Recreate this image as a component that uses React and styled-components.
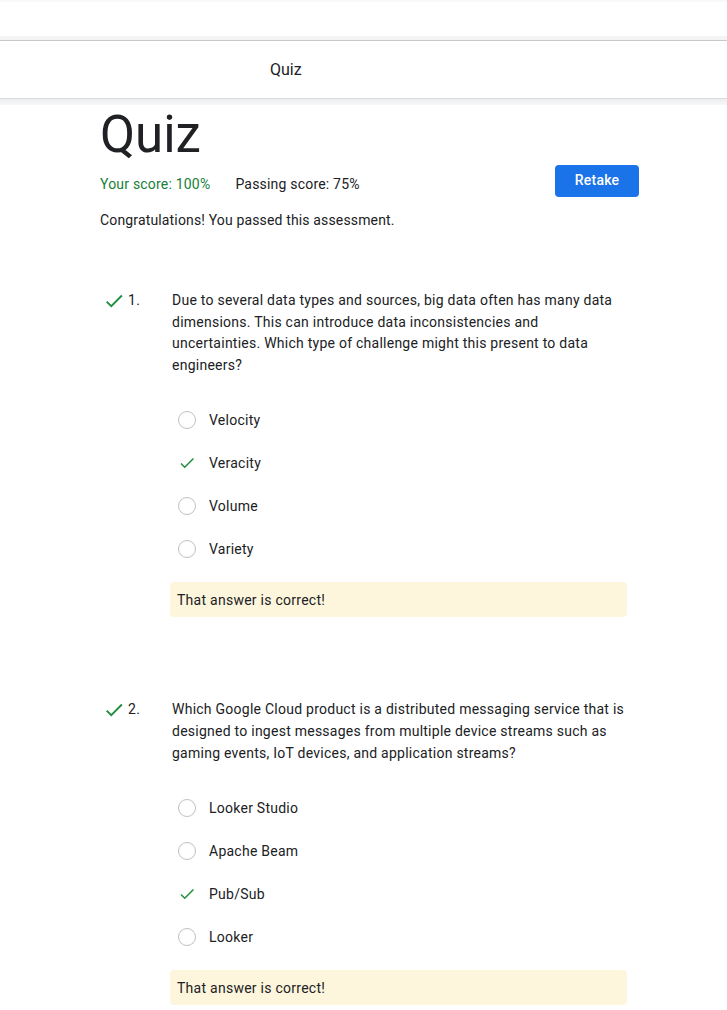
import React from 'react';
import styled, { createGlobalStyle } from 'styled-components';

const GlobalStyle = createGlobalStyle`
  html, body {
    margin: 0;
    padding: 0;
    background: #ffffff;
    font-family: Roboto, "Liberation Sans", Arial, sans-serif;
    color: #202124;
  }
`;

const Page = styled.div`
  width: 727px;
  min-height: 1010px;
  overflow: hidden;
`;

const BrowserTop = styled.div`
  height: 34px;
  border-top: 2px solid #f8f9fa;
  border-bottom: 4px solid #f4f4f4;
  background: #ffffff;
`;

const TitleBar = styled.header`
  height: 57px;
  display: flex;
  align-items: center;
  padding-left: 270px;
  border-top: 1px solid #c8c8c8;
  border-bottom: 1px solid #dadce0;
  font-size: 16px;
  color: #202124;
`;

const Shade = styled.div`
  height: 6px;
  background: linear-gradient(#eceef1, #f6f7f9);
`;

const Content = styled.main`
  width: 539px;
  padding-left: 100px;
`;

const Heading = styled.h1`
  margin: 0;
  font-size: 51px;
  line-height: 60px;
  font-weight: 400;
  color: #202124;
`;

const ScoreRow = styled.div`
  display: flex;
  align-items: flex-start;
  height: 32px;
`;

const Score = styled.span`
  font-size: 14px;
  line-height: 20px;
  letter-spacing: 0.2px;
  margin-top: 9px;
  margin-right: ${p => p.$gap || 0}px;
  color: ${p => (p.$pass ? '#188038' : '#202124')};
`;

const RetakeButton = styled.button`
  margin-left: auto;
  width: 84px;
  height: 32px;
  padding: 0 0 3px;
  border: none;
  border-radius: 4px;
  background: #1a73e8;
  color: #ffffff;
  font-family: Roboto, "Liberation Sans", Arial, sans-serif;
  font-size: 14px;
  font-weight: 500;
  letter-spacing: 0.25px;
  cursor: pointer;
`;

const Message = styled.p`
  margin: 13px 0 0;
  font-size: 14px;
  line-height: 20px;
  letter-spacing: 0.15px;
`;

const Question = styled.section`
  margin-top: ${p => p.$top}px;
  padding-right: 12px;
`;

const QuestionHead = styled.div`
  display: grid;
  grid-template-columns: 72px 1fr;
  font-size: 14px;
  line-height: 21.6px;
  letter-spacing: 0.25px;
`;

const Marker = styled.div`
  display: flex;
  align-items: flex-start;
  gap: 3px;
  padding-left: 3px;

  svg {
    flex-shrink: 0;
  }
`;

const Prompt = styled.p`
  margin: 0;
`;

const Options = styled.ul`
  list-style: none;
  margin: 22px 0 0 72px;
  padding: 0;
`;

const Option = styled.li`
  height: 43px;
  display: flex;
  align-items: center;
  gap: 13px;
  padding-left: 6px;
  font-size: 14px;
  letter-spacing: 0.25px;
`;

const Radio = styled.span`
  width: 18px;
  height: 18px;
  box-sizing: border-box;
  border: 1.5px solid #bdc1c6;
  border-radius: 50%;
  flex-shrink: 0;
`;

const Feedback = styled.div`
  margin: 12px 0 0 70px;
  height: 35px;
  display: flex;
  align-items: center;
  padding-left: 7px;
  background: #fef6dc;
  border-radius: 4px;
  font-size: 14px;
  letter-spacing: 0.26px;
`;

const Check = ({ size = 24 }) => (
  <svg width={size} height={size} viewBox="0 0 24 24" fill="none">
    <path d="M4 12.6l5 5L20.6 6" stroke="#1e8e3e" strokeWidth="2" />
  </svg>
);

const questions = [
  {
    n: 1,
    top: 60,
    text: 'Due to several data types and sources, big data often has many data dimensions. This can introduce data inconsistencies and uncertainties. Which type of challenge might this present to data engineers?',
    options: ['Velocity', 'Veracity', 'Volume', 'Variety'],
    answer: 1,
  },
  {
    n: 2,
    top: 82,
    text: 'Which Google Cloud product is a distributed messaging service that is designed to ingest messages from multiple device streams such as gaming events, IoT devices, and application streams?',
    options: ['Looker Studio', 'Apache Beam', 'Pub/Sub', 'Looker'],
    answer: 2,
  },
];

const App = () => (
  <Page>
    <GlobalStyle />
    <BrowserTop />
    <TitleBar>Quiz</TitleBar>
    <Shade />
    <Content>
      <Heading>Quiz</Heading>
      <ScoreRow>
        <Score $pass $gap={25}>Your score: 100%</Score>
        <Score>Passing score: 75%</Score>
        <RetakeButton>Retake</RetakeButton>
      </ScoreRow>
      <Message>Congratulations! You passed this assessment.</Message>

      {questions.map(q => (
        <Question key={q.n} $top={q.top}>
          <QuestionHead>
            <Marker>
              <Check size={22} />
              <span>{q.n}.</span>
            </Marker>
            <Prompt>{q.text}</Prompt>
          </QuestionHead>
          <Options>
            {q.options.map((o, i) => (
              <Option key={o}>
                {i === q.answer ? <Check size={18} /> : <Radio />}
                {o}
              </Option>
            ))}
          </Options>
          <Feedback>That answer is correct!</Feedback>
        </Question>
      ))}
    </Content>
  </Page>
);

export default App;
